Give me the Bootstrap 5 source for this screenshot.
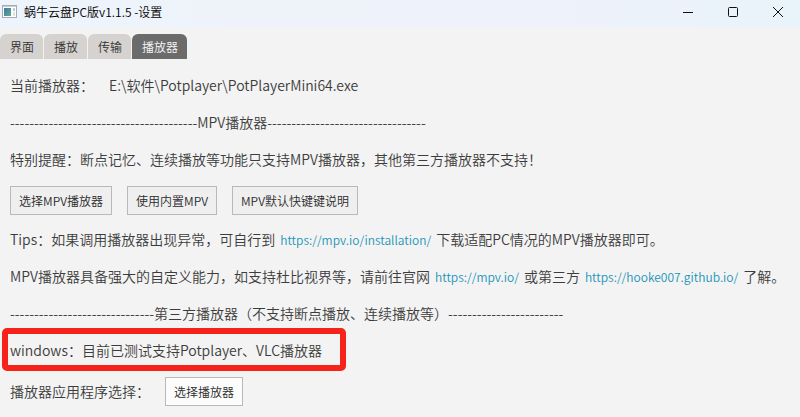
<!DOCTYPE html>
<html lang="zh-CN">
<head>
<meta charset="utf-8">
<meta name="viewport" content="width=device-width, initial-scale=1">
<title>蜗牛云盘PC版v1.1.5 -设置</title>
<link href="https://cdn.jsdelivr.net/npm/bootstrap@5.3.0/dist/css/bootstrap.min.css" rel="stylesheet">
<style>
body { background: #f3f3f3; color: #3c3c3c; font-family: "Noto Sans CJK SC", sans-serif; font-size: 14px; line-height: 21px; font-weight: 350; }
.titlebar { background: linear-gradient(90deg, #eef4fb, #eef2fa 70%, #e9f3fa); height: 27px; color: #111; }
.titlebar h1 { font-size: 12px; line-height: 24px; font-weight: 350; color: #000; margin-left: 6px; }
.app-icon { margin-left: 2px; }
.win-btn { width: 45px; height: 24px; color: #111; }
.settings-tabs { gap: 1px; margin-top: 7px; }
.settings-tabs .nav-link { background: #d5d2cf; color: #333; font-size: 12px; line-height: 25px; padding: 0 9px 0 10px; border-radius: 6px 6px 0 0; font-weight: 350; }
.settings-tabs .nav-link.active { background: #6b6b6b; color: #f5f5f5; }
.settings-body { padding: 16px 10px 10px; gap: 16px; }
.tool-btn { border: 1px solid #b9b9b9; border-radius: 0; background: #efefef; color: #2b2b2b; font-size: 12px; line-height: 27px; padding: 0 8px; font-weight: 350; }
.tool-btn.light-face { background: #fcfcfc; }
.tool-row { gap: 15px; }
.button-strip { margin-bottom: -2px; }
.doc-link { color: #1c93b8; font-size: 12px; text-decoration: none; margin: 0 5px; }
.highlighted { width: fit-content; }
.highlight-frame { inset: -12px -24px -10px -8px; border: 6px solid #f5231a; border-radius: 5px; pointer-events: none; }
</style>
<script src="https://cdn.jsdelivr.net/npm/bootstrap@5.3.0/dist/js/bootstrap.bundle.min.js"></script>
</head>
<body>
<header class="titlebar d-flex align-items-start">
  <svg class="app-icon flex-shrink-0 mt-1" width="16" height="16" viewBox="0 0 16 16" aria-hidden="true">
    <defs><linearGradient id="pane" x1="0" y1="0" x2="1" y2="1"><stop offset="0" stop-color="#3f78a8"/><stop offset="1" stop-color="#62aa8c"/></linearGradient></defs>
    <rect x=".5" y="1.5" width="14" height="12" fill="#fff" stroke="#a3acb0"/>
    <path d="M1 2.5h13" stroke="#c4d0d6"/>
    <rect x="2" y="4" width="7" height="8" fill="url(#pane)"/>
    <path d="M11 4h2v3h-2z" fill="#b7cfd0"/><path d="M11 8h2v4h-2z" fill="#dce4e4"/>
  </svg>
  <h1 class="mb-0 flex-grow-1">蜗牛云盘PC版v1.1.5 -设置</h1>
  <button type="button" class="win-btn btn border-0 rounded-0 p-0 d-flex align-items-center justify-content-center" aria-label="最小化"><svg width="12" height="12" viewBox="0 0 12 12"><path d="M1 6.5h10" stroke="currentColor"/></svg></button>
  <button type="button" class="win-btn btn border-0 rounded-0 p-0 d-flex align-items-center justify-content-center" aria-label="最大化"><svg width="12" height="12" viewBox="0 0 12 12" fill="none"><rect x="1.5" y="1.5" width="9" height="9" rx="1" stroke="currentColor"/></svg></button>
  <button type="button" class="win-btn btn border-0 rounded-0 p-0 d-flex align-items-center justify-content-center" aria-label="关闭"><svg width="12" height="12" viewBox="0 0 12 12"><path d="M1 1l10 10M11 1L1 11" stroke="currentColor"/></svg></button>
</header>
<nav class="nav settings-tabs" role="tablist" aria-label="设置">
  <button type="button" class="nav-link border-0" role="tab">界面</button>
  <button type="button" class="nav-link border-0" role="tab">播放</button>
  <button type="button" class="nav-link border-0" role="tab">传输</button>
  <button type="button" class="nav-link border-0 active" role="tab" aria-selected="true">播放器</button>
</nav>
<main class="settings-body d-flex flex-column">
  <div class="d-flex tool-row"><span>当前播放器：</span><span>E:\软件\Potplayer\PotPlayerMini64.exe</span></div>
  <div>---------------------------------------MPV播放器---------------------------------</div>
  <div>特别提醒：断点记忆、连续播放等功能只支持MPV播放器，其他第三方播放器不支持！</div>
  <div class="button-strip d-flex flex-wrap tool-row">
    <button type="button" class="btn tool-btn">选择MPV播放器</button>
    <button type="button" class="btn tool-btn">使用内置MPV</button>
    <button type="button" class="btn tool-btn">MPV默认快键键说明</button>
  </div>
  <div>Tips：如果调用播放器出现异常，可自行到<a class="doc-link" href="https://mpv.io/installation/">https://mpv.io/installation/</a>下载适配PC情况的MPV播放器即可。</div>
  <div>MPV播放器具备强大的自定义能力，如支持杜比视界等，请前往官网<a class="doc-link" href="https://mpv.io/">https://mpv.io/</a>或第三方<a class="doc-link" href="https://hooke007.github.io/">https://hooke007.github.io/</a>了解。</div>
  <div>------------------------------第三方播放器（不支持断点播放、连续播放等）------------------------</div>
  <div class="highlighted position-relative">windows：目前已测试支持Potplayer、VLC播放器<span class="highlight-frame position-absolute"></span></div>
  <div class="d-flex align-items-center tool-row"><label for="pick-player">播放器应用程序选择：</label><button type="button" id="pick-player" class="btn tool-btn light-face">选择播放器</button></div>
</main>
</body>
</html>
